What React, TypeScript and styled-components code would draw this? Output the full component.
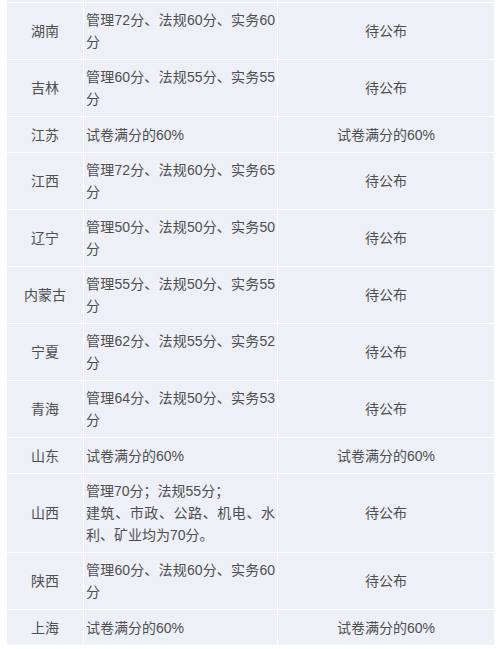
import React from "react";
import styled, { createGlobalStyle } from "styled-components";

const Global = createGlobalStyle`
  html, body { margin: 0; padding: 0; background: #ffffff; }
  body { font-family: "Liberation Sans", "Noto Sans CJK SC", sans-serif; }
`;

const Page = styled.div`
  width: 500px;
  height: 649px;
  overflow: hidden;
  background: #ffffff;
  padding-left: 6px;
  box-sizing: border-box;
`;

const Table = styled.table`
  width: 488px;
  table-layout: fixed;
  border-collapse: collapse;
  font-size: 14px;
  color: #4f4f4f;
`;

const Cell = styled.td<{ $align?: "center" | "justify" }>`
  background: #edf0f7;
  border: 1px solid #ffffff;
  padding: 6px 2px;
  height: 36px;
  box-sizing: border-box;
  line-height: 22px;
  vertical-align: middle;
  text-align: ${(p) => (p.$align === "justify" ? "justify" : "center")};
  word-break: break-all;
`;

const StripCell = styled.td`
  background: #edf0f7;
  border: 1px solid #ffffff;
  border-top: 0;
  height: 2px;
  padding: 0;
  line-height: 0;
  font-size: 0;
`;

type Row = { region: string; score: React.ReactNode; result: string };

const rows: Row[] = [
  { region: "湖南", score: "管理72分、法规60分、实务60分", result: "待公布" },
  { region: "吉林", score: "管理60分、法规55分、实务55分", result: "待公布" },
  { region: "江苏", score: "试卷满分的60%", result: "试卷满分的60%" },
  { region: "江西", score: "管理72分、法规60分、实务65分", result: "待公布" },
  { region: "辽宁", score: "管理50分、法规50分、实务50分", result: "待公布" },
  { region: "内蒙古", score: "管理55分、法规50分、实务55分", result: "待公布" },
  { region: "宁夏", score: "管理62分、法规55分、实务52分", result: "待公布" },
  { region: "青海", score: "管理64分、法规50分、实务53分", result: "待公布" },
  { region: "山东", score: "试卷满分的60%", result: "试卷满分的60%" },
  {
    region: "山西",
    score: (
      <>
        管理70分；法规55分；
        <br />
        建筑、市政、公路、机电、水利、矿业均为70分。
      </>
    ),
    result: "待公布",
  },
  { region: "陕西", score: "管理60分、法规60分、实务60分", result: "待公布" },
  { region: "上海", score: "试卷满分的60%", result: "试卷满分的60%" },
];

export default function App() {
  return (
    <Page>
      <Global />
      <Table>
        <colgroup>
          <col style={{ width: 77 }} />
          <col style={{ width: 194 }} />
          <col style={{ width: 217 }} />
        </colgroup>
        <tbody>
          <tr>
            <StripCell />
            <StripCell />
            <StripCell />
          </tr>
          {rows.map((r) => (
            <tr key={r.region}>
              <Cell>{r.region}</Cell>
              <Cell $align="justify">{r.score}</Cell>
              <Cell>{r.result}</Cell>
            </tr>
          ))}
        </tbody>
      </Table>
    </Page>
  );
}
